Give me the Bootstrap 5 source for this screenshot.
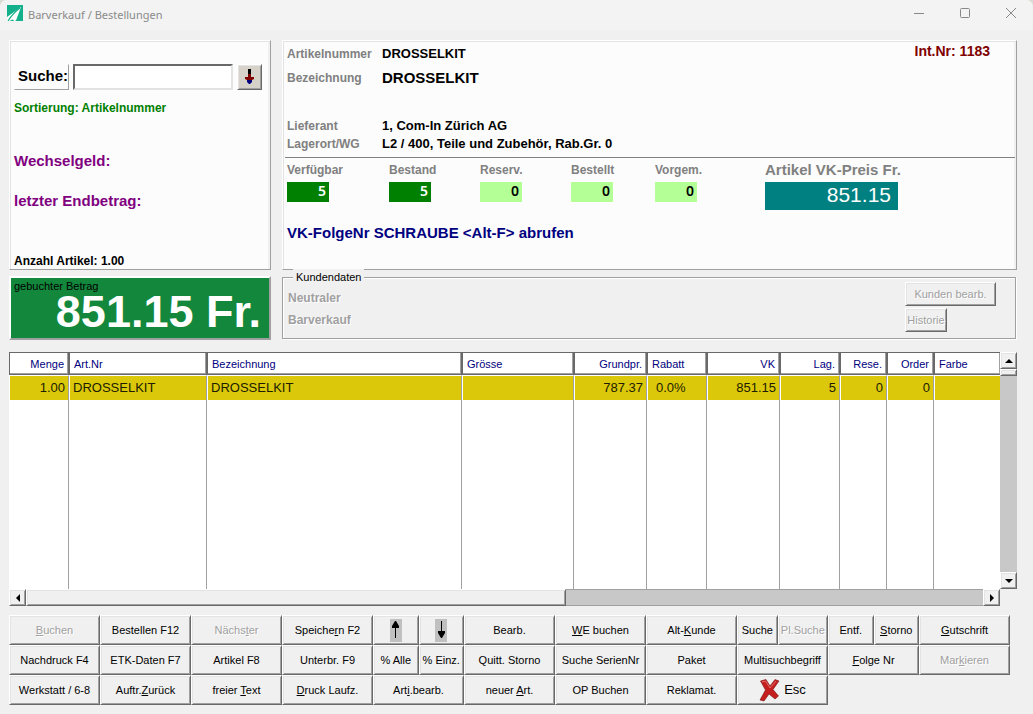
<!DOCTYPE html>
<html lang="de">
<head>
<meta charset="utf-8">
<meta name="viewport" content="width=device-width, initial-scale=1">
<title>Barverkauf / Bestellungen</title>
<link href="https://cdn.jsdelivr.net/npm/bootstrap@5.3.0/dist/css/bootstrap.min.css" rel="stylesheet">
<style>
  :root { --dark:#696969; --mid:#a0a0a0; --lite:#e3e3e3; --face:#f0f0f0; }
  html { background:#dcdcd6; }
  body { font-family:"Liberation Sans",Arial,sans-serif; font-size:12px; line-height:18px; color:#000; background:transparent; }
  .app-window { background:var(--face); border-radius:7px 7px 0 0; overflow:hidden; }
  .titlebar { height:30px; background:#f3f3f3; color:#8a8a8a; font-family:"Noto Sans",sans-serif; font-size:11px; padding:0 16px 0 7px; }
  .titlebar .caption-btn { border:0; background:none; padding:0; width:12px; height:12px; display:flex; }
  .workspace { padding:10px 16px 9px 9px; }
  .side { width:262px; flex:none; }
  .frame { background:#fcfcfc; border:1px solid; border-color:#fff var(--mid) var(--mid) #fff; box-shadow:inset 1px 1px var(--lite), inset -2px 0 var(--face); }
  .upper { height:230px; }
  .raised { background:var(--face); border:1px solid; border-color:#fff var(--dark) var(--dark) #fff; box-shadow:inset 1px 1px var(--lite), inset -1px -1px var(--mid); border-radius:0; padding:0; color:#000; font-size:11px; line-height:16px; white-space:nowrap; }
  .raised:disabled { color:var(--mid); text-shadow:1px 1px #fff; }
  .f13 { font-size:13px; } .f14 { font-size:14px; } .f15 { font-size:15px; }
  .search-label { border:1px solid; border-color:#fcfcfc var(--mid) var(--mid) #fcfcfc; width:56px; height:26px; line-height:22px; padding-left:3px; white-space:nowrap; }
  .search-input { height:26px; border:2px solid; border-color:var(--dark) var(--lite) var(--lite) var(--dark); background:#fff; padding:0 4px; min-width:0; outline:0; border-radius:0; }
  .drop-btn { width:26px; height:26px; background:#d6d2ca; display:flex; align-items:center; justify-content:center; }
  .sum-box { background:#13883c; border:2px solid; border-color:#fff var(--mid) var(--mid) #fff; height:64px; color:#fff; padding:0 8px 0 3px; }
  .sum-box label { color:#000; font-size:11px; line-height:16px; display:block; }
  .sum-box output { display:block; font-size:45px; line-height:36px; text-align:right; white-space:nowrap; }
  .article { display:grid; grid-template-columns:95px 1fr; grid-template-rows:24px 24px 27px 18px 18px; align-items:center; margin:0; flex:1; }
  .article dt, .grey { color:#808080; } .article dt, .article dd { margin:0; }
  .int-nr { color:#800000; padding-right:26px; }
  .rule { border-top:1px solid #808080; margin:4px 1px 0 2px; }
  .stats { padding:3px 0 0 4px; }
  .stat { width:42px; height:20px; font:600 14px/18px "Noto Sans",sans-serif; text-align:right; padding-right:3px; margin-top:3px; }
  .s-dark { background:#008000; color:#fff; } .s-lite { background:#b4ff96; color:#000; }
  .price { background:#008080; color:#fff; font-size:21px; line-height:26px; height:28px; text-align:right; padding-right:7px; margin-top:3px; }
  .customer { border:1px solid var(--mid); box-shadow:1px 1px #fff, inset 1px 1px #fff; height:62px; margin:1px 1px 0 0; position:relative; color:var(--mid); padding:9px 19px 0 5px; }
  .customer legend { position:absolute; left:10px; top:-9px; float:none; width:auto; margin:0; padding:0 3px; background:var(--face); color:#000; font-size:11px; line-height:16px; }
  .soft { text-shadow:1px 1px #fff; }
  .listing { display:grid; grid-template-columns:1fr 17px; grid-template-rows:minmax(237px,1fr) 17px; background:#fff; }
  .items { table-layout:fixed; width:100%; height:100%; border-collapse:separate; border-spacing:0; }
  .items th { height:23px; padding:0 4px; border:1px solid var(--dark); box-shadow:inset -1px -1px var(--mid); font-size:11px; line-height:16px; font-weight:400; color:#000080; white-space:nowrap; }
  .items td { padding:0 3px; border:solid; border-width:0 1px 0 1px; border-color:#fff var(--mid) #fff #fff; font-size:13px; line-height:22px; }
  .items .entry td { height:25px; border-top-width:1px; background:#dcc80a; color:#201c00; }
  .items th:last-child, .items td:last-child { border-right:0; }
  .scroll { background:#c8c8c8; }
  .scroll .raised { width:17px; height:17px; flex:none; display:flex; align-items:center; justify-content:center; }
  .scroll .thumb { height:7px; } .hscroll .thumb { width:540px; height:17px; }
  .hscroll { border-top:1px solid var(--mid); border-bottom:1px solid var(--mid); }
  .hscroll > * { margin-top:-1px; }
  .keys { display:grid; grid-template-columns:repeat(11,1fr); grid-auto-rows:30px; padding-right:7px; }
  .split { display:flex; } .split .raised { flex:1 1 0; min-width:0; }
  .arrow-tile { background:#c0c0c0; display:block; margin:0 auto; }
</style>
</head>
<body>
<div class="app-window min-vh-100 d-flex flex-column">
  <header class="titlebar d-flex align-items-center">
    <svg width="16" height="16" viewBox="0 0 16 16" class="mb-1"><path fill="#14b08c" d="M0 0h16v16H0z"/><path fill="#fff" d="M0 12 14 2 9 15.500 7.500 16 5.500 14.500 2.500 16H0z"/><path d="M1 16Q6 8 13 3" stroke="#14b08c" fill="none" stroke-width="1.200"/></svg>
    <span class="me-auto ps-1" style="margin-left:1px">Barverkauf / Bestellungen</span>
    <div class="d-flex mb-1" style="gap:34px">
      <button class="caption-btn" aria-label="Minimieren"><svg width="12" height="12"><path d="M1 6.500h10" stroke="#888"/></svg></button>
      <button class="caption-btn" aria-label="Maximieren"><svg width="12" height="12"><rect x="1.500" y="1.500" width="9" height="9" rx="1" fill="none" stroke="#888"/></svg></button>
      <button class="caption-btn" aria-label="Schliessen"><svg width="12" height="12"><path d="m1 1 10 10M11 1 1 11" stroke="#888"/></svg></button>
    </div>
  </header>

  <main class="workspace flex-grow-1 d-flex flex-column">
    <div class="d-flex">
      <section class="side frame upper d-flex flex-column fw-bold">
        <div class="d-flex align-items-center ps-1 pe-2" style="margin-top:23px">
          <label for="suche" class="search-label f15">Suche:</label>
          <input id="suche" class="search-input flex-grow-1 ms-1" type="text">
          <button class="raised drop-btn ms-1" aria-label="Suche öffnen"><svg width="11" height="16" viewBox="0 0 11 16"><path d="M4 0h3v6H4z"/><path fill="#800000" d="M4 5h3v3h3v2L8 11H3L1 10V8h3z"/><path fill="#000080" d="M3 11h5v2L6 15H5L3 13z"/></svg></button>
        </div>
        <div class="ps-1" style="color:#008000;margin-top:9px">Sortierung: Artikelnummer</div>
        <div class="f15 ps-1" style="color:#800080;margin-top:35px">Wechselgeld:</div>
        <div class="f15 ps-1" style="color:#800080;margin-top:22px">letzter Endbetrag:</div>
        <div class="mt-auto ps-1" style="line-height:16px">Anzahl Artikel: 1.00</div>
      </section>

      <section class="frame upper flex-grow-1 fw-bold" style="margin-left:11px">
        <div class="d-flex ps-1 align-items-start" style="height:112px;padding-top:1px">
          <dl class="article">
            <dt>Artikelnummer</dt><dd class="f13">DROSSELKIT</dd>
            <dt>Bezeichnung</dt><dd class="f15">DROSSELKIT</dd>
            <dt></dt><dd></dd>
            <dt>Lieferant</dt><dd class="f13">1, Com-In Zürich AG</dd>
            <dt>Lagerort/WG</dt><dd class="f13">L2 / 400, Teile und Zubehör, Rab.Gr. 0</dd>
          </dl>
          <div class="f14 int-nr">Int.Nr: 1183</div>
        </div>
        <div class="rule"></div>
        <div class="d-flex stats">
          <div style="width:102px"><div class="grey">Verfügbar</div><div class="stat s-dark">5</div></div>
          <div style="width:91px"><div class="grey">Bestand</div><div class="stat s-dark">5</div></div>
          <div style="width:91px"><div class="grey">Reserv.</div><div class="stat s-lite">0</div></div>
          <div style="width:84px"><div class="grey">Bestellt</div><div class="stat s-lite">0</div></div>
          <div style="width:110px"><div class="grey">Vorgem.</div><div class="stat s-lite">0</div></div>
          <div style="width:133px"><div class="grey f15 text-nowrap">Artikel VK-Preis Fr.</div><div class="price fw-normal">851.15</div></div>
        </div>
        <div class="f15 ps-1" style="color:#000080;margin-top:14px">VK-FolgeNr SCHRAUBE &lt;Alt-F&gt; abrufen</div>
      </section>
    </div>

    <div class="d-flex" style="margin-top:6px">
      <div class="side sum-box fw-bold">
        <label for="betrag" class="fw-normal">gebuchter Betrag</label>
        <output id="betrag">851.15 Fr.</output>
      </div>
      <fieldset class="customer flex-grow-1 d-flex justify-content-between fw-bold" style="margin-left:11px">
        <legend class="fw-normal">Kundendaten</legend>
        <div class="soft"><div class="pt-1 pb-1" style="margin-top:-2px">Neutraler</div><div>Barverkauf</div></div>
        <div class="d-flex flex-column align-items-start" style="margin-top:-5px;gap:2px">
          <button class="raised" style="width:91px;height:24px" disabled>Kunden bearb.</button>
          <button class="raised" style="width:42px;height:24px" disabled>Historie</button>
        </div>
      </fieldset>
    </div>

    <div class="listing flex-grow-1" style="margin-top:12px">
      <table class="items">
        <colgroup><col style="width:60px"><col style="width:138px"><col><col style="width:112px"><col style="width:73px"><col style="width:60px"><col style="width:73px"><col style="width:60px"><col style="width:47px"><col style="width:47px"><col style="width:66px"></colgroup>
        <thead><tr><th class="text-end">Menge</th><th>Art.Nr</th><th>Bezeichnung</th><th>Grösse</th><th class="text-end">Grundpr.</th><th>Rabatt</th><th class="text-end">VK</th><th class="text-end">Lag.</th><th class="text-end">Rese.</th><th class="text-end">Order</th><th>Farbe</th></tr></thead>
        <tbody>
          <tr class="entry"><td class="text-end">1.00</td><td>DROSSELKIT</td><td>DROSSELKIT</td><td></td><td class="text-end">787.37</td><td class="ps-2">&#8203;0.0%</td><td class="text-end">851.15</td><td class="text-end">5</td><td class="text-end">0</td><td class="text-end">0</td><td></td></tr>
          <tr style="height:100%"><td></td><td></td><td></td><td></td><td></td><td></td><td></td><td></td><td></td><td></td><td></td></tr>
        </tbody>
      </table>
      <div class="scroll d-flex flex-column">
        <button class="raised" aria-label="Nach oben"><svg width="8" height="4"><path d="M0 4h8L4 0z"/></svg></button>
        <div class="raised thumb"></div>
        <button class="raised mt-auto" aria-label="Nach unten"><svg width="8" height="4"><path d="M0 0h8L4 4z"/></svg></button>
      </div>
      <div class="scroll hscroll d-flex">
        <button class="raised" aria-label="Nach links"><svg width="4" height="8"><path d="M4 0v8L0 4z"/></svg></button>
        <div class="raised thumb"></div>
        <button class="raised ms-auto" aria-label="Nach rechts"><svg width="4" height="8"><path d="M0 0v8l4-4z"/></svg></button>
      </div>
      <div style="background:var(--face)"></div>
    </div>

    <div class="keys" style="margin-top:9px">
      <button class="raised" disabled><u>B</u>uchen</button>
      <button class="raised">Bestellen F12</button>
      <button class="raised" disabled>Nächs<u>t</u>er</button>
      <button class="raised">Speiche<u>r</u>n F2</button>
      <div class="split">
        <button class="raised" aria-label="Auf"><svg class="arrow-tile" width="12" height="23"><path d="M5 2h1l3 5v2H2V7zM5 8h1v11H5z"/></svg></button>
        <button class="raised" aria-label="Ab"><svg class="arrow-tile" width="12" height="23"><path d="M6 2h1v11H6zM3 12h7v2l-3 5H6l-3-5z"/></svg></button>
      </div>
      <button class="raised">Bearb.</button>
      <button class="raised"><u>W</u>E buchen</button>
      <button class="raised">Alt-<u>K</u>unde</button>
      <div class="split">
        <button class="raised" style="flex-grow:4">Suche</button>
        <button class="raised" style="flex-grow:5" disabled>Pl.Suche</button>
      </div>
      <div class="split">
        <button class="raised">Entf.</button>
        <button class="raised"><u>S</u>torno</button>
      </div>
      <button class="raised"><u>G</u>utschrift</button>

      <button class="raised">Nachdruck F4</button>
      <button class="raised">ETK-Daten F7</button>
      <button class="raised">Artikel F8</button>
      <button class="raised">Unterbr. F9</button>
      <div class="split">
        <button class="raised">% Alle</button>
        <button class="raised">% Einz.</button>
      </div>
      <button class="raised">Quitt. Storno</button>
      <button class="raised">Suche SerienNr</button>
      <button class="raised">Paket</button>
      <button class="raised">Multisuchbegriff</button>
      <button class="raised"><u>F</u>olge Nr</button>
      <button class="raised" disabled>Mar<u>k</u>ieren</button>

      <button class="raised">Werkstatt / 6-8</button>
      <button class="raised">Auftr.<u>Z</u>urück</button>
      <button class="raised">freier <u>T</u>ext</button>
      <button class="raised"><u>D</u>ruck Laufz.</button>
      <button class="raised">Art<u>i</u>.bearb.</button>
      <button class="raised">neuer <u>A</u>rt.</button>
      <button class="raised">OP Buchen</button>
      <button class="raised">Reklamat.</button>
      <button class="raised d-flex align-items-center justify-content-center"><svg width="21" height="24" viewBox="0 0 21 24"><path fill="#c41e1e" stroke="#7a1010" stroke-width=".6" d="M1.500 3 7 1.500 11 8 16 1.500 20 3 14 11.500 19.500 18 16 21 10 16 5 23 1 22 6.500 12z"/><path d="M3 4l3.500-1 4.500 7 6-7" fill="none" stroke="#ee8080" stroke-width=".8"/></svg><span class="f13 ps-1">Esc</span></button>
    </div>
  </main>
</div>
<script src="https://cdn.jsdelivr.net/npm/bootstrap@5.3.0/dist/js/bootstrap.bundle.min.js"></script>
</body>
</html>
